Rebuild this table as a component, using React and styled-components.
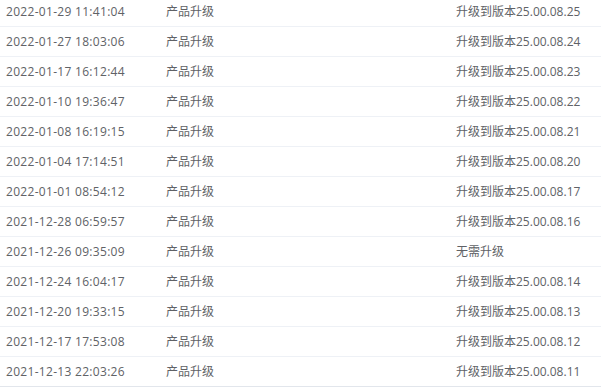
import React from 'react'
import styled, { createGlobalStyle } from 'styled-components'

const GlobalStyle = createGlobalStyle`
  html, body {
    margin: 0;
    padding: 0;
    background: #fff;
  }
  body {
    font-family: "Open Sans", "Noto Sans CJK SC", sans-serif;
  }
`

const LOGS = [
  { time: '2022-01-29 11:41:04', type: '产品升级', result: '升级到版本25.00.08.25' },
  { time: '2022-01-27 18:03:06', type: '产品升级', result: '升级到版本25.00.08.24' },
  { time: '2022-01-17 16:12:44', type: '产品升级', result: '升级到版本25.00.08.23' },
  { time: '2022-01-10 19:36:47', type: '产品升级', result: '升级到版本25.00.08.22' },
  { time: '2022-01-08 16:19:15', type: '产品升级', result: '升级到版本25.00.08.21' },
  { time: '2022-01-04 17:14:51', type: '产品升级', result: '升级到版本25.00.08.20' },
  { time: '2022-01-01 08:54:12', type: '产品升级', result: '升级到版本25.00.08.17' },
  { time: '2021-12-28 06:59:57', type: '产品升级', result: '升级到版本25.00.08.16' },
  { time: '2021-12-26 09:35:09', type: '产品升级', result: '无需升级' },
  { time: '2021-12-24 16:04:17', type: '产品升级', result: '升级到版本25.00.08.14' },
  { time: '2021-12-20 19:33:15', type: '产品升级', result: '升级到版本25.00.08.13' },
  { time: '2021-12-17 17:53:08', type: '产品升级', result: '升级到版本25.00.08.12' },
  { time: '2021-12-13 22:03:26', type: '产品升级', result: '升级到版本25.00.08.11' },
]

function App() {
  return (
    <>
      <GlobalStyle />
      <TableBody>
        <RowList>
          {LOGS.map((log, index) => (
            <Row key={index} $last={index === LOGS.length - 1}>
              <Cell $spacing={0.3}>{log.time}</Cell>
              <Cell>{log.type}</Cell>
              <Cell>{log.result}</Cell>
            </Row>
          ))}
        </RowList>
      </TableBody>
    </>
  )
}

export default App

const TableBody = styled.div`
  width: 601px;
  height: 389px;
  overflow: hidden;
  background: #fff;
`

// 스크롤된 상태처럼 첫 줄 일부가 잘려 보이게
const RowList = styled.div`
  margin-top: -3px;
`

const Row = styled.div`
  display: grid;
  grid-template-columns: 160px 290px 1fr;
  align-items: center;
  box-sizing: border-box;
  height: 30px;
  padding: 1px 0 0 6px;
  border-bottom: 1px solid ${(props) => (props.$last ? '#e2e6ec' : '#eef1f6')};
`

const Cell = styled.span`
  font-size: 12px;
  line-height: 16px;
  color: #606266;
  white-space: nowrap;
  letter-spacing: ${(props) => props.$spacing || 0}px;
`
